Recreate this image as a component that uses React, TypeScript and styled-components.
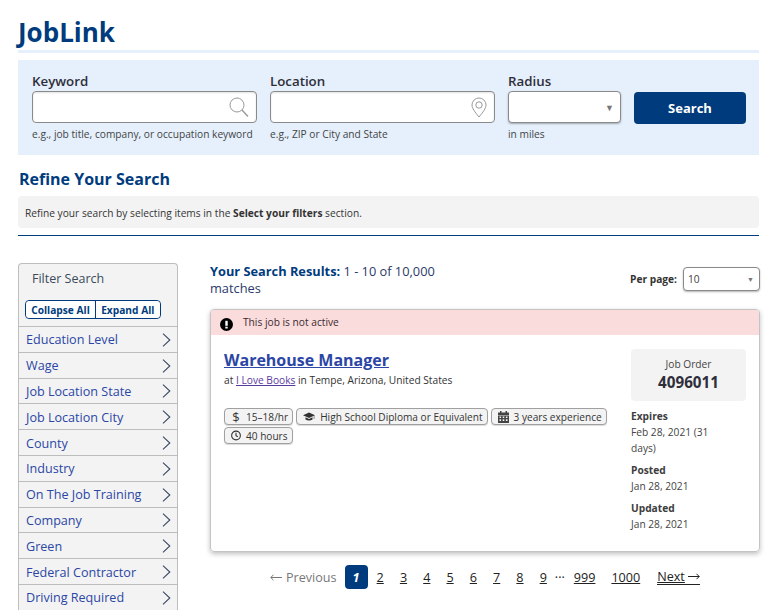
import React from "react";
import styled, { createGlobalStyle } from "styled-components";

const navy = "#003c7d";
const link = "#2b46a5";
const text = "#333333";

const GlobalStyle = createGlobalStyle`
  html, body { margin: 0; padding: 0; background: #fff; height: 610px; overflow: hidden; }
  body { font-family: "Open Sans", "Liberation Sans", sans-serif; color: ${text}; }
`;

const Page = styled.div`
  width: 759px;
  padding: 14px 0 0 18px;
  box-sizing: border-box;
`;

const Brand = styled.h1`
  margin: 0;
  font-size: 26px;
  line-height: 36px;
  font-weight: 700;
  color: ${navy};
  border-bottom: 3px solid #e6f0fc;
`;

const SearchPanel = styled.form`
  margin-top: 7px;
  height: 95px;
  background: #e5f0fc;
  box-sizing: border-box;
  padding: 12px 13px 0 14px;
  display: flex;
`;

const Field = styled.div<{ $w: number; $gap: number }>`
  width: ${(p) => p.$w}px;
  margin-right: ${(p) => p.$gap}px;
`;

const Label = styled.label`
  display: block;
  font-size: 13.3px;
  line-height: 19px;
  font-weight: 600;
  color: #2e2e3a;
`;

const InputBox = styled.div`
  height: 32px;
  box-sizing: border-box;
  background: #fff;
  border: 1px solid #8a8a8a;
  border-radius: 4px;
  box-shadow: inset 0 1px 2px rgba(0, 0, 0, 0.12);
  display: flex;
  align-items: center;
  justify-content: flex-end;
  padding-right: 7px;
`;

const SelectBox = styled(InputBox)`
  box-shadow: 0 1px 2px rgba(0, 0, 0, 0.3);
  padding-right: 6px;
  color: #777;
  font-size: 9px;
`;

const Hint = styled.div`
  font-size: 10.2px;
  line-height: 14px;
  margin-top: 4px;
  color: #444;
  white-space: nowrap;
`;

const SearchButton = styled.button`
  width: 112px;
  height: 32px;
  margin-top: 20px;
  background: ${navy};
  color: #fff;
  border: none;
  border-radius: 4px;
  font: 700 13px "Open Sans", sans-serif;
`;

const SectionTitle = styled.h2`
  margin: 14px 0 6px 1px;
  font-size: 16px;
  line-height: 21px;
  font-weight: 700;
  color: ${navy};
`;

const Notice = styled.div`
  height: 32px;
  background: #f3f3f3;
  border-radius: 4px;
  padding: 0 7px;
  font-size: 10.2px;
  line-height: 34px;
  color: #333;
`;

const Rule = styled.hr`
  margin: 7px 0 0;
  border: none;
  border-top: 1px solid ${navy};
`;

const Columns = styled.div`
  margin: 27px -1px 0 0;
  display: grid;
  grid-template-columns: 160px 1fr;
  column-gap: 32px;
`;

const Sidebar = styled.aside`
  background: #f3f3f3;
  border: 1px solid #bdbdbd;
  border-bottom: none;
  border-radius: 4px 4px 0 0;
  box-sizing: border-box;
  height: 347px;
  overflow: hidden;
`;

const SidebarTitle = styled.div`
  padding: 6px 0 0 13px;
  font-size: 12.5px;
  line-height: 17px;
  color: #3a4a5a;
`;

const ToggleGroup = styled.div`
  display: inline-flex;
  margin: 13px 0 7px 6px;
  border: 1px solid ${navy};
  border-radius: 4px;
  height: 19px;
  box-sizing: border-box;
`;

const ToggleButton = styled.button`
  border: none;
  background: #fff;
  padding: 0 5.2px;
  color: ${navy};
  font: 700 10.2px "Open Sans", sans-serif;
  border-radius: 4px;
  & + & { border-left: 1px solid ${navy}; border-radius: 0 4px 4px 0; }
`;

const FilterRow = styled.div`
  height: 25.8px;
  box-sizing: border-box;
  border-top: 1px solid #bdbdbd;
  padding: 1px 6px 0 7px;
  display: flex;
  align-items: center;
  justify-content: space-between;
  font-size: 12.6px;
  color: ${link};
  svg { flex: none; }
`;

const ResultsHead = styled.div`
  display: flex;
  justify-content: space-between;
  align-items: flex-start;
  height: 46px;
`;

const ResultCount = styled.div`
  width: 240px;
  font-size: 12.8px;
  line-height: 17px;
  color: #2b3a6a;
  strong { color: ${navy}; font-weight: 700; }
`;

const PerPage = styled.div`
  margin-top: 4px;
  display: flex;
  align-items: center;
  gap: 6px;
  font-size: 10.2px;
  font-weight: 700;
  color: #333;
`;

const PerSelect = styled.div`
  width: 77px;
  height: 24px;
  box-sizing: border-box;
  background: #fff;
  border: 1px solid #8a8a8a;
  border-radius: 4px;
  box-shadow: 0 1px 2px rgba(0, 0, 0, 0.3);
  padding: 0 5px 0 4px;
  display: flex;
  align-items: center;
  justify-content: space-between;
  font-size: 10.2px;
  font-weight: 400;
  color: #444;
  span { font-size: 7px; color: #777; }
`;

const JobCard = styled.article`
  height: 243px;
  border-radius: 4px;
  border: 1px solid #c4c4c4;
  box-shadow: 0 2px 5px rgba(0, 0, 0, 0.25);
  box-sizing: border-box;
  overflow: hidden;
`;

const Alert = styled.div`
  height: 25px;
  background: #fadcdc;
  display: flex;
  align-items: flex-start;
  gap: 10px;
  padding: 5px 0 0 9px;
  box-sizing: border-box;
  font-size: 10.2px;
  line-height: 14px;
  color: #3a2a30;
`;

const AlertIcon = styled.svg`
  margin-top: 3px;
  flex: none;
`;

const CardBody = styled.div`
  display: flex;
  justify-content: space-between;
  padding: 13px 13px 0 13px;
`;

const JobMain = styled.div`
  width: 392px;
`;

const JobTitle = styled.a`
  display: block;
  font-size: 16px;
  line-height: 24px;
  font-weight: 700;
  color: ${link};
  text-decoration: underline;
`;

const Employer = styled.div`
  font-size: 10.2px;
  line-height: 14px;
  margin-top: 1px;
  color: #333;
  a { color: #5b3a9e; text-decoration: underline; }
`;

const Tags = styled.div`
  margin-top: 21px;
  display: flex;
  flex-wrap: wrap;
  gap: 2px 3px;
`;

const Tag = styled.span`
  height: 17px;
  box-sizing: border-box;
  display: inline-flex;
  align-items: center;
  gap: 5px;
  padding: 0 4px 0 6px;
  background: #f3f3f3;
  border: 1px solid #a0a0a0;
  border-radius: 4px;
  box-shadow: 0 1px 1px rgba(0, 0, 0, 0.15);
  font-size: 10.1px;
  white-space: nowrap;
  color: #333;
`;

const Dollar = styled.span`
  width: 10px;
  text-align: center;
  font-size: 13px;
`;

const JobAside = styled.div`
  width: 115px;
  padding-top: 1px;
  font-size: 10.2px;
  line-height: 16px;
  color: #444;
`;

const OrderBox = styled.div`
  height: 52px;
  background: #f3f3f3;
  border-radius: 4px;
  text-align: center;
  padding-top: 8px;
  box-sizing: border-box;
  margin-bottom: 7px;
  font-size: 10.2px;
  line-height: 14px;
  strong { display: block; font-size: 15.2px; line-height: 22px; font-weight: 700; color: #2e2e3a; }
`;

const DateLabel = styled.div`
  font-weight: 700;
  color: #3d3d3d;
`;

const DateValue = styled.div`
  max-width: 100px;
  margin-bottom: 6px;
`;

const Pagination = styled.nav`
  margin-top: 13px;
  display: flex;
  align-items: center;
  font-size: 12.6px;
  padding-left: 60px;
  color: #222;
`;

const PageLink = styled.a<{ $gap?: number }>`
  display: inline-flex;
  align-items: center;
  text-decoration: underline;
  color: #222;
  margin-left: ${(p) => p.$gap ?? 0}px;
`;

const Ellipsis = styled.span`
  margin: 0 9px 0 8px;
  color: #222;
`;

const PageCurrent = styled.span`
  width: 23px;
  height: 24px;
  background: ${navy};
  color: #fff;
  border-radius: 4px;
  font-style: italic;
  font-weight: 700;
  display: flex;
  align-items: center;
  justify-content: center;
  margin: 0 9px 0 8px;
`;

const Previous = styled.span`
  display: inline-flex;
  align-items: center;
  gap: 4px;
  color: #777;
`;

const NextLabel = styled.span`
  border-bottom: 1px solid #222;
  display: inline-flex;
  align-items: center;
  gap: 3px;
  line-height: 15px;
`;

const filters = [
  "Education Level",
  "Wage",
  "Job Location State",
  "Job Location City",
  "County",
  "Industry",
  "On The Job Training",
  "Company",
  "Green",
  "Federal Contractor",
  "Driving Required",
];

const pages = ["2", "3", "4", "5", "6", "7", "8", "9"];

function SearchIcon() {
  return (
    <svg width="20" height="21" viewBox="0 0 20 21" fill="none" stroke="#999">
      <circle cx="8" cy="8" r="7" strokeWidth="1" />
      <path d="M13 13l6 6.5" strokeWidth="1.4" />
    </svg>
  );
}

function PinIcon() {
  return (
    <svg width="16" height="21" viewBox="0 0 16 21" fill="none" stroke="#999">
      <path d="M8 20C4 15 1 11.5 1 8a7 7 0 0 1 14 0c0 3.5-3 7-7 12z" />
      <circle cx="8" cy="8" r="3.2" />
    </svg>
  );
}

function Chevron() {
  return (
    <svg width="9" height="14" viewBox="0 0 9 14" fill="none" stroke="#3c4a66" strokeWidth="1.1">
      <path d="M1 .7L7.8 7 1 13.3" />
    </svg>
  );
}

function CapIcon() {
  return (
    <svg width="12" height="10" viewBox="0 0 12 10" fill="#333">
      <path d="M6 .5L0 3.2l6 2.8 6-2.800z" />
      <path d="M2.500 5.200V7.500c1.800 1.400 5.200 1.400 7 0V5.200L6 6.900z" />
      <path d="M10.800 3.800h.5v3.200h-.5z" />
    </svg>
  );
}

function CalendarIcon() {
  return (
    <svg width="11" height="12" viewBox="0 0 11 12" fill="#444">
      <path d="M2 0h1.500v2H2zM7.500 0H9v2H7.500zM0 1.500h11V4H0z" />
      <path d="M0 4.500h11V12H0zM1.500 5.500V7h1.600V5.500zM4.700 5.500V7h1.600V5.500zM7.900 5.500V7h1.600V5.500zM1.500 8.300v1.600h1.600V8.300zM4.700 8.300v1.600h1.600V8.300zM7.900 8.300v1.600h1.600V8.300z" fillRule="evenodd" />
    </svg>
  );
}

function ClockIcon() {
  return (
    <svg width="10" height="11" viewBox="0 0 11 11" fill="none" stroke="#333" strokeWidth="1.2">
      <circle cx="5.500" cy="5.500" r="4.800" />
      <path d="M5.500 2.500v3.200l2 1.200" />
    </svg>
  );
}

function LongArrow({ left, color }: { left?: boolean; color: string }) {
  return (
    <svg width="12" height="7" viewBox="0 0 12 7" fill="none" stroke={color} strokeWidth="1">
      <path d={left ? "M12 3.500H.8M3.500 .8L.8 3.500l2.700 2.700" : "M0 3.500h11.200M8.500 .8l2.700 2.700-2.700 2.700"} />
    </svg>
  );
}

export default function App() {
  return (
    <Page>
      <GlobalStyle />
      <Brand>JobLink</Brand>

      <SearchPanel>
        <Field $w={225} $gap={13}>
          <Label>Keyword</Label>
          <InputBox>
            <SearchIcon />
          </InputBox>
          <Hint>e.g., job title, company, or occupation keyword</Hint>
        </Field>
        <Field $w={225} $gap={13}>
          <Label>Location</Label>
          <InputBox>
            <PinIcon />
          </InputBox>
          <Hint>e.g., ZIP or City and State</Hint>
        </Field>
        <Field $w={113} $gap={13}>
          <Label>Radius</Label>
          <SelectBox>▼</SelectBox>
          <Hint>in miles</Hint>
        </Field>
        <SearchButton type="button">Search</SearchButton>
      </SearchPanel>

      <SectionTitle>Refine Your Search</SectionTitle>
      <Notice>
        Refine your search by selecting items in the <b>Select your filters</b> section.
      </Notice>
      <Rule />

      <Columns>
        <Sidebar>
          <SidebarTitle>Filter Search</SidebarTitle>
          <ToggleGroup>
            <ToggleButton type="button">Collapse All</ToggleButton>
            <ToggleButton type="button">Expand All</ToggleButton>
          </ToggleGroup>
          {filters.map((f) => (
            <FilterRow key={f}>
              {f}
              <Chevron />
            </FilterRow>
          ))}
        </Sidebar>

        <main>
          <ResultsHead>
            <ResultCount>
              <strong>Your Search Results:</strong> 1 - 10 of 10,000 matches
            </ResultCount>
            <PerPage>
              Per page:
              <PerSelect>
                10<span>▼</span>
              </PerSelect>
            </PerPage>
          </ResultsHead>

          <JobCard>
            <Alert>
              <AlertIcon width="13" height="13" viewBox="0 0 13 13">
                <circle cx="6.500" cy="6.500" r="6.500" fill="#000" />
                <rect x="5.300" y="2.800" width="2.400" height="5" fill="#fff" />
                <rect x="5.300" y="8.700" width="2.400" height="1.800" fill="#fff" />
              </AlertIcon>
              This job is not active
            </Alert>
            <CardBody>
              <JobMain>
                <JobTitle>Warehouse Manager</JobTitle>
                <Employer>
                  at <a>I Love Books</a> in Tempe, Arizona, United States
                </Employer>
                <Tags>
                  <Tag>
                    <Dollar>$</Dollar>
                    15–18/hr
                  </Tag>
                  <Tag>
                    <CapIcon />
                    High School Diploma or Equivalent
                  </Tag>
                  <Tag>
                    <CalendarIcon />
                    3 years experience
                  </Tag>
                  <Tag>
                    <ClockIcon />
                    40 hours
                  </Tag>
                </Tags>
              </JobMain>
              <JobAside>
                <OrderBox>
                  Job Order
                  <strong>4096011</strong>
                </OrderBox>
                <DateLabel>Expires</DateLabel>
                <DateValue>Feb 28, 2021 (31 days)</DateValue>
                <DateLabel>Posted</DateLabel>
                <DateValue>Jan 28, 2021</DateValue>
                <DateLabel>Updated</DateLabel>
                <DateValue>Jan 28, 2021</DateValue>
              </JobAside>
            </CardBody>
          </JobCard>

          <Pagination>
            <Previous>
              <LongArrow left color="#777" />
              Previous
            </Previous>
            <PageCurrent>1</PageCurrent>
            {pages.map((p, i) => (
              <PageLink key={p} $gap={i === 0 ? 0 : 16.1}>
                {p}
              </PageLink>
            ))}
            <Ellipsis>···</Ellipsis>
            <PageLink>999</PageLink>
            <PageLink $gap={16}>1000</PageLink>
            <PageLink as="span" $gap={17}>
              <NextLabel>
                Next
                <LongArrow color="#222" />
              </NextLabel>
            </PageLink>
          </Pagination>
        </main>
      </Columns>
    </Page>
  );
}
